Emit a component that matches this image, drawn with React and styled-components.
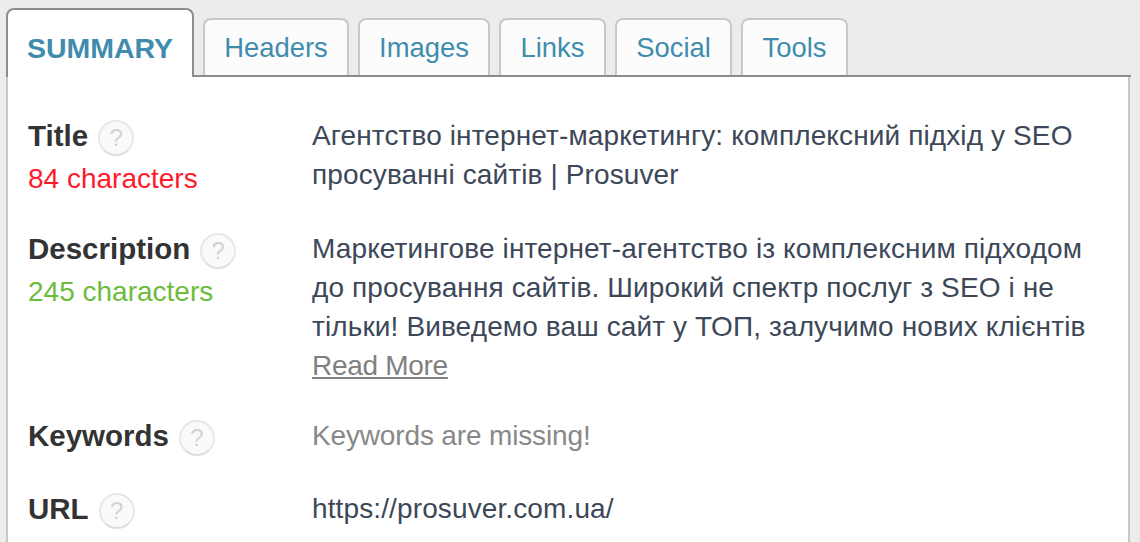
import React from 'react'
import styled, { createGlobalStyle } from 'styled-components'

const GlobalStyle = createGlobalStyle`
    html, body {
        margin: 0;
        padding: 0;
        background: #ececec;
        height: 542px;
        overflow: hidden;
    }
    body {
        font-family: "Liberation Sans", Arial, sans-serif;
    }
`

const Wrapper = styled.div`
    width: 1140px;
    height: 542px;
    overflow: hidden;
    padding: 8px 9px 0 6px;
    box-sizing: border-box;
`

const TabBar = styled.div`
    display: flex;
    align-items: flex-end;
    gap: 9px;
    height: 67px;
    border-bottom: 2px solid #8c8c8c;
`

const Tab = styled.div`
    box-sizing: border-box;
    background: ${props => props.$active ? '#fff' : '#fcfcfc'};
    color: #3f8cae;
    font-size: ${props => props.$active ? '28.5px' : '27.4px'};
    font-weight: ${props => props.$active ? 'bold' : 'normal'};
    height: ${props => props.$active ? '69px' : '57px'};
    width: ${props => props.$w}px;
    margin-bottom: ${props => props.$active ? '-2px' : '0'};
    padding-top: ${props => props.$active ? '21px' : '11px'};
    text-align: center;
    line-height: 34px;
    border: 2px solid ${props => props.$active ? '#8c8c8c' : '#c8c8c8'};
    border-bottom: none;
    border-radius: 8px 8px 0 0;
`

const Panel = styled.div`
    background: #fff;
    border-left: 2px solid #c8c8c8;
    border-right: 2px solid #c8c8c8;
    margin-right: 1px;
    padding: 39px 20px 0 20px;
    height: 480px;
    box-sizing: border-box;
`

const Row = styled.div`
    display: grid;
    grid-template-columns: 284px 1fr;
    margin-bottom: ${props => props.$gap}px;
`

const Label = styled.div`
    font-size: 29.5px;
    height: 39px;
    line-height: 39px;
    font-weight: bold;
    color: #333;
    display: flex;
    align-items: flex-start;
`

const Help = styled.span`
    width: 36px;
    height: 36px;
    flex: none;
    box-sizing: border-box;
    margin-left: 10px;
    margin-top: 4px;
    border-radius: 50%;
    border: 2px solid #e8e8e8;
    border-bottom-color: #dedede;
    background: #fafafa;
    color: #d2d2d2;
    font-size: 24px;
    font-weight: normal;
    line-height: 32px;
    text-align: center;
`

const Count = styled.div`
    font-size: 28px;
    line-height: 39px;
    margin-top: 4px;
    color: ${props => props.$color};
`

const Value = styled.div`
    font-size: 28px;
    line-height: 39px;
    letter-spacing: ${props => props.$muted ? '-0.15px' : '0.12px'};
    color: ${props => props.$muted ? '#888' : '#3c4858'};
    white-space: pre-line;
`

const ReadMore = styled.a`
    color: #808080;
    letter-spacing: -0.3px;
    text-decoration: underline;
`

const tabs = [
    { name: 'Headers', w: 146 },
    { name: 'Images', w: 132 },
    { name: 'Links', w: 107 },
    { name: 'Social', w: 117 },
    { name: 'Tools', w: 107 },
]

const App = () => {
    return (
        <Wrapper>
            <GlobalStyle />
            <TabBar>
                <Tab $active $w={188}>SUMMARY</Tab>
                {tabs.map(tab => <Tab key={tab.name} $w={tab.w}>{tab.name}</Tab>)}
            </TabBar>
            <Panel>
                <Row $gap={31}>
                    <div>
                        <Label>Title<Help>?</Help></Label>
                        <Count $color="#ff1a2b">84 characters</Count>
                    </div>
                    <Value>{'Агентство інтернет-маркетингу: комплексний підхід у SEO\nпросуванні сайтів | Prosuver'}</Value>
                </Row>
                <Row $gap={31}>
                    <div>
                        <Label>Description<Help>?</Help></Label>
                        <Count $color="#6cbb3c">245 characters</Count>
                    </div>
                    <Value>
                        {'Маркетингове інтернет-агентство із комплексним підходом\nдо просування сайтів. Широкий спектр послуг з SEO і не\nтільки! Виведемо ваш сайт у ТОП, залучимо нових клієнтів\n'}
                        <ReadMore>Read More</ReadMore>
                    </Value>
                </Row>
                <Row $gap={34}>
                    <Label>Keywords<Help>?</Help></Label>
                    <Value $muted>Keywords are missing!</Value>
                </Row>
                <Row $gap={0}>
                    <Label>URL<Help>?</Help></Label>
                    <Value>https://prosuver.com.ua/</Value>
                </Row>
            </Panel>
        </Wrapper>
    )
}

export default App
